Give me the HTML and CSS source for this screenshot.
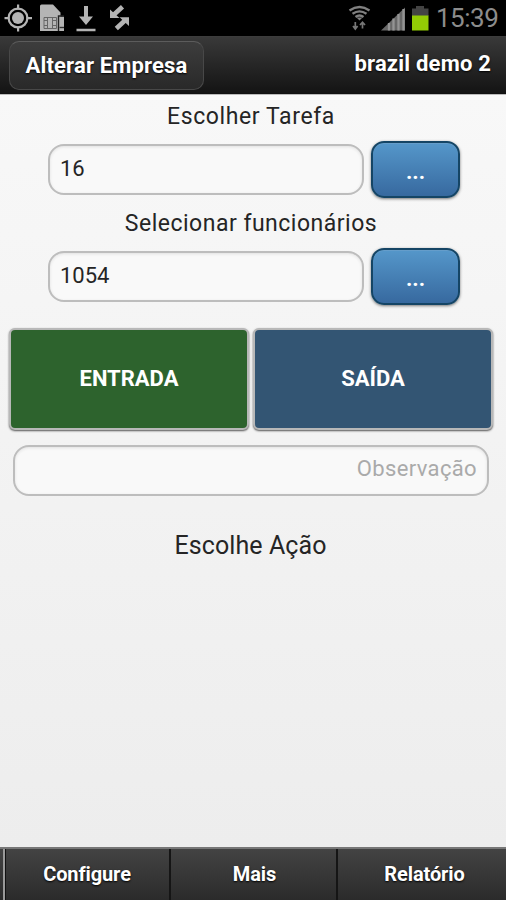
FILE: index.html
```html
<!DOCTYPE html>
<html lang="pt-BR">
<head>
<meta charset="utf-8">
<meta name="viewport" content="width=device-width">
<title>Alterar Empresa</title>
<link rel="stylesheet" href="styles.css">
</head>
<body>
<div class="app">
  <div class="status">
    <svg class="status-left" width="140" height="36" viewBox="0 0 140 36" fill="#b4b4b4" aria-hidden="true">
      <circle cx="18" cy="18" r="9.4" fill="none" stroke="#b4b4b4" stroke-width="2.200"/>
      <circle cx="18" cy="18" r="6"/>
      <path d="M17 4.500h2.200v5H17zM17 26.500h2.200v5H17zM4.500 17h5v2.200h-5zM26.500 17h5.500v2.200h-5.500z"/>
      <path d="M40 6q0-1.500 1.500-1.500H53l7.500 8v4h3.500V31H40z"/>
      <path d="M44 17.500h12.500v11H44zM47.500 17.500v11M52.500 17.500v11M44 20.500h3.500M52.500 20.500h4M44 25.500h3.500M52.500 25.500h4" fill="none" stroke="#666" stroke-width="1"/>
      <path d="M58.500 31V16h5.500" fill="none" stroke="#222" stroke-width="1.400"/>
      <path d="M59.500 27.500h4.500" stroke="#333" stroke-width="1.400"/>
      <path d="M84 6h4v10.500h5L86 25l-7-8.500h5zM76.500 28.700h19v2.500h-19z"/>
      <path d="M110 9.500V18h9.500zM129 26v-8.700h-9.500z"/>
      <path d="M122.500 6.800L113.500 15M116.300 28.500l9.200-8.500" stroke="#b4b4b4" stroke-width="4.600"/>
    </svg>
    <svg class="status-right" width="94" height="36" viewBox="340 0 94 36" aria-hidden="true">
      <g fill="none" stroke="#808080" stroke-width="2.300">
        <path d="M349.500 10.500q10-7 20 0"/>
        <path d="M352.500 13.800q7-5 14 0"/>
        <path d="M355.500 17q4-3 8 0"/>
      </g>
      <path d="M356.500 17.500h6l-3 3z" fill="#808080"/>
      <path d="M355.300 22v6M353 26l2.300 3 2.300-3M362.500 28.500V23M360 25l2.500-2.800 2.500 2.800" fill="none" stroke="#777" stroke-width="1.700"/>
      <path d="M381 30.500L405 7.500v23z" fill="#686868"/>
      <path d="M389 23v7.500M393.500 18.500v12M398.500 14v16.500M403.500 9v21.500" stroke="#949494" stroke-width="2.300"/>
      <path d="M412 8.500h4v-2.500h8v2.500h4.500v7.500H412z" fill="#444"/>
      <path d="M412 15.500h16.500v15H412z" fill="#93cc05"/>
    </svg>
    <span class="clock">15:39</span>
  </div>
  <header class="header">
    <button class="company">Alterar Empresa</button>
    <span class="user">brazil demo 2</span>
  </header>
  <main class="main">
    <label class="label label-task" for="task">Escolher Tarefa</label>
    <div class="row">
      <input class="field" id="task" value="16">
      <button class="more">...</button>
    </div>
    <label class="label label-staff" for="staff">Selecionar funcionários</label>
    <div class="row">
      <input class="field" id="staff" value="1054">
      <button class="more">...</button>
    </div>
    <div class="actions">
      <button class="action in">ENTRADA</button>
      <button class="action out">SAÍDA</button>
    </div>
    <input class="field note" placeholder="Observação">
    <p class="prompt">Escolhe Ação</p>
  </main>
  <nav class="tabs">
    <a class="tab tab-config">Configure</a>
    <a class="tab">Mais</a>
    <a class="tab tab-report">Relatório</a>
  </nav>
</div>
</body>
</html>
```
FILE: styles.css
```css
* { box-sizing: border-box; }
body { margin: 0; font-family: Roboto, "Liberation Sans", sans-serif; color: #252525; }
button, input { font: inherit; margin: 0; }
.app { height: 900px; display: flex; flex-direction: column; overflow: hidden; }
.status { height: 36px; flex: none; background: #000; display: flex; align-items: center; }
.status svg { display: block; flex: none; }
.status-right { margin-left: auto; }
.clock { width: 72px; font-size: 26px; letter-spacing: -.5px; padding-left: 2px; line-height: 36px; color: #8c8c8c; white-space: nowrap; }
.header { height: 59px; flex: none; display: flex; align-items: flex-start; justify-content: space-between; padding: 4px 15px 0 9px; background: linear-gradient(#393939, #131313); border-top: 1px solid #3c3c3c; border-bottom: 1px solid #bbb; box-shadow: inset 0 -1px #111; }
.company { width: 195px; height: 49px; padding: 0 0 1px; border: 1px solid #484848; border-top-color: #5c5c5c; border-radius: 10px; background: linear-gradient(#3d3d3d, #292929); color: #fff; font-size: 22px; font-weight: 700; letter-spacing: .15px; text-shadow: 0 1px 2px #000; white-space: nowrap; }
.user { color: #fff; font-size: 22px; letter-spacing: .2px; line-height: 45px; font-weight: 700; text-shadow: 0 1px 2px #000; white-space: nowrap; }
.main { flex: 1; display: flex; flex-direction: column; background: linear-gradient(#f8f8f8, #ededed); }
.label { padding-right: 4px; text-align: center; font-size: 23px; white-space: nowrap; }
.label-task { height: 46px; line-height: 44px; letter-spacing: .6px; }
.label-staff { height: 50px; line-height: 52px; letter-spacing: .5px; }
.row { height: 57px; display: flex; align-items: center; gap: 7px; padding: 0 46px 0 48px; }
.field { width: 316px; height: 51px; border: 2px solid #bdbdbd; border-radius: 16px; padding: 0 10px 3px; background: #f9f9f9; box-shadow: inset 0 1px 3px #e1e1e1; color: #252525; font-size: 22px; outline: none; }
.more { width: 89px; height: 57px; border: 2px solid #154565; border-radius: 13px; padding: 4px 0 0; background: linear-gradient(#5597ca, #37699f); box-shadow: 0 1px 3px #777, inset 0 1px #659dca; color: #fff; font-size: 22px; font-weight: 700; }
.actions { display: flex; gap: 4px; margin-top: 23px; padding: 0 13px 0 9px; }
.action { flex: 1; height: 102px; border: 2px solid #b8b8b8; border-radius: 6px; padding: 0 0 2px; color: #fff; font-size: 22px; font-weight: 700; box-shadow: 0 1px 2px #555; }
.in { background: #2d632d; }
.out { background: #335573; }
.note { width: 476px; margin: 15px 0 0 13px; padding-bottom: 4px; font-size: 22px; letter-spacing: .35px; text-align: right; }
.note::placeholder { color: #aaa; opacity: 1; }
.prompt { margin: 32px 0 0; padding-right: 5px; text-align: center; font-size: 25px; letter-spacing: .1px; line-height: 36px; }
.tabs { height: 53px; flex: none; display: grid; grid-template-columns: 166px 167px 1fr; padding-left: 3px; background: linear-gradient(#434343, #2b2b2b); border-top: 2px solid #777; }
.tab { padding-left: 2px; color: #fff; text-align: center; font-size: 20px; line-height: 50px; font-weight: 700; letter-spacing: -.1px; text-shadow: 0 1px 2px #000; border-left: 2px solid #151515; }
.tab-config { padding-left: 0; border-left-color: #999; box-shadow: inset 1px 0 #111; }
.tab-report { padding-left: 5px; }
```
